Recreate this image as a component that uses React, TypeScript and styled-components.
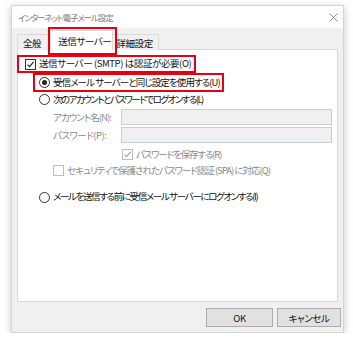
import React from "react";
import styled, { createGlobalStyle } from "styled-components";

const GlobalStyle = createGlobalStyle`
  html, body {
    margin: 0;
    padding: 0;
    background: #ffffff;
  }
  body {
    font-family: "Noto Sans CJK JP", "Liberation Sans", sans-serif;
    font-size: 9.5px;
    letter-spacing: -0.4px;
    font-feature-settings: "palt";
    color: #111;
  }
`;

interface ILabel {
	disabled?: boolean;
	tracking?: number;
}

function Checkbox({ checked, disabled }: { checked?: boolean; disabled?: boolean }) {
	const stroke = disabled ? "#a6a6a6" : "#222";
	return (
		<Box disabled={disabled}>
			{checked && (
				<svg width="9" height="9" viewBox="0 0 9 9">
					<path d="M1.5 4.6 L3.6 6.7 L7.6 1.8" fill="none" stroke={stroke} strokeWidth="1.2" />
				</svg>
			)}
		</Box>
	);
}

function Radio({ checked }: { checked?: boolean }) {
	return <Circle>{checked && <Dot />}</Circle>;
}

export default function App() {
	return (
		<Page>
			<GlobalStyle />
			<Window>
				<TitleBar>
					<Title>インターネット電子メール設定</Title>
					<svg width="9" height="9" viewBox="0 0 9 9">
						<path d="M0.5 0.5 L8.5 8.5 M8.5 0.5 L0.5 8.5" stroke="#8a8a8a" strokeWidth="1" />
					</svg>
				</TitleBar>
				<Body>
					<Tabs>
						<FirstTab>全般</FirstTab>
						<ActiveTab>送信サーバー</ActiveTab>
						<LastTab>詳細設定</LastTab>
					</Tabs>
					<Panel>
						<AuthRow>
							<Checkbox checked />
							<Label>送信サーバー (SMTP) は認証が必要(O)</Label>
						</AuthRow>
						<SameRow>
							<Radio checked />
							<Label tracking={-0.9}>受信メール サーバーと同じ設定を使用する(U)</Label>
						</SameRow>
						<OptionRow>
							<Radio />
							<Label tracking={-1.5}>次のアカウントとパスワードでログオンする(L)</Label>
						</OptionRow>
						<Fields>
							<FieldLabel tracking={-0.95}>アカウント名(N):</FieldLabel>
							<Input />
							<FieldLabel tracking={-0.5}>パスワード(P):</FieldLabel>
							<Input />
						</Fields>
						<SubRow indent={104} height={17} top={3}>
							<Checkbox checked disabled />
							<Label disabled tracking={-1.15}>パスワードを保存する(R)</Label>
						</SubRow>
						<SubRow indent={35} height={15} top={0}>
							<Checkbox disabled />
							<Label disabled tracking={-1}>セキュリティで保護されたパスワード認証 (SPA) に対応(Q)</Label>
						</SubRow>
						<LogonRow>
							<Radio />
							<Label tracking={-1.35}>メールを送信する前に受信メール サーバーにログオンする(I)</Label>
						</LogonRow>
					</Panel>
					<Footer>
						<Button width={67}>OK</Button>
						<Button width={64}>キャンセル</Button>
					</Footer>
				</Body>
			</Window>
		</Page>
	);
}

const Page = styled.div`
	padding: 5px 0 0 11px;
`;

const Window = styled.div`
	width: 333px;
	height: 328px;
	box-sizing: border-box;
	border: 1px solid #d4d4d4;
	background: #f0f0f0;
	box-shadow: 0 2px 8px rgba(0, 0, 0, 0.22);
	display: flex;
	flex-direction: column;
`;

const TitleBar = styled.div`
	height: 22px;
	background: #fff;
	display: flex;
	align-items: center;
	justify-content: space-between;
	padding: 0 5px 0 6px;
	flex-shrink: 0;
`;

const Title = styled.span`
	color: #7c7c7c;
	font-size: 8.5px;
	letter-spacing: -1.1px;
`;

const Body = styled.div`
	flex: 1;
	padding: 0 5px;
	display: flex;
	flex-direction: column;
`;

const Tabs = styled.div`
	display: flex;
	align-items: flex-end;
	height: 22px;
	position: relative;
	z-index: 1;
	margin-bottom: -1px;
`;

const Tab = styled.div`
	height: 15px;
	padding: 0 4px;
	border: 1px solid #d9d9d9;
	border-bottom: none;
	background: #f0f0f0;
	display: flex;
	align-items: center;
	white-space: nowrap;
`;

const FirstTab = styled(Tab)`
	padding: 0 9px 0 5px;
`;

const LastTab = styled(Tab)`
	padding: 0 5px 0 3px;
`;

const ActiveTab = styled(Tab)`
	height: 19px;
	padding: 0 1px 0 7px;
	margin: 0 -1px;
	background: #fff;
	position: relative;
	z-index: 2;

	&::after {
		content: "";
		position: absolute;
		top: -4px;
		left: -3px;
		right: -5px;
		bottom: -5px;
		border: 2px solid #e60012;
	}
`;

const Panel = styled.div`
	height: 253px;
	box-sizing: border-box;
	background: #fff;
	border: 1px solid #d9d9d9;
	padding-top: 5px;
	display: flex;
	flex-direction: column;
	align-items: flex-start;
`;

const Row = styled.div`
	display: flex;
	align-items: center;
	gap: 3px;
	white-space: nowrap;
`;

const AuthRow = styled(Row)`
	margin-left: -1px;
	height: 14px;
	padding: 0 3px 0 6px;
	border: 2px solid #e60012;
`;

const SameRow = styled(Row)`
	margin-left: 15px;
	height: 15px;
	padding: 0 2px 0 4px;
	border: 2px solid #e60012;
`;

const OptionRow = styled(Row)`
	margin-left: 21px;
	height: 15px;
`;

const LogonRow = styled(Row)`
	margin: 11px 0 0 21px;
	height: 16px;
`;

const SubRow = styled(Row)<{ indent: number; height: number; top: number }>`
	margin-left: ${(p) => p.indent}px;
	margin-top: ${(p) => p.top}px;
	height: ${(p) => p.height}px;
`;

const Label = styled.span<ILabel>`
	line-height: 1;
	letter-spacing: ${(p) => p.tracking ?? -0.4}px;
	color: ${(p) => (p.disabled ? "#8a8a8a" : "#111")};
`;

const Box = styled.span<{ disabled?: boolean }>`
	width: 9px;
	height: 9px;
	border: 1px solid ${(p) => (p.disabled ? "#bcbcbc" : "#333")};
	background: #fff;
	display: inline-flex;
	align-items: center;
	justify-content: center;
	flex-shrink: 0;
`;

const Circle = styled.span`
	width: 9px;
	height: 9px;
	border: 1px solid #333;
	border-radius: 50%;
	background: #fff;
	display: inline-flex;
	align-items: center;
	justify-content: center;
	flex-shrink: 0;
`;

const Dot = styled.span`
	width: 5px;
	height: 5px;
	border-radius: 50%;
	background: #222;
`;

const Fields = styled.div`
	margin: 2px 0 0 35px;
	display: grid;
	grid-template-columns: 68px 211px;
	grid-auto-rows: 16px;
	row-gap: 2px;
	align-items: center;
`;

const FieldLabel = styled.span<ILabel>`
	color: #8a8a8a;
	white-space: nowrap;
	letter-spacing: ${(p) => p.tracking ?? -0.4}px;
`;

const Input = styled.div`
	height: 16px;
	box-sizing: border-box;
	border: 1px solid #c2cfdc;
	background: #f0f0f0;
`;

const Footer = styled.div`
	display: flex;
	justify-content: flex-end;
	gap: 4px;
	padding: 6px 0 0;
	margin-right: -3px;
`;

const Button = styled.div<{ width: number }>`
	width: ${(p) => p.width}px;
	height: 19px;
	box-sizing: border-box;
	border: 1px solid #adadad;
	background: #e1e1e1;
	display: flex;
	align-items: center;
	justify-content: center;
	color: #111;
`;
